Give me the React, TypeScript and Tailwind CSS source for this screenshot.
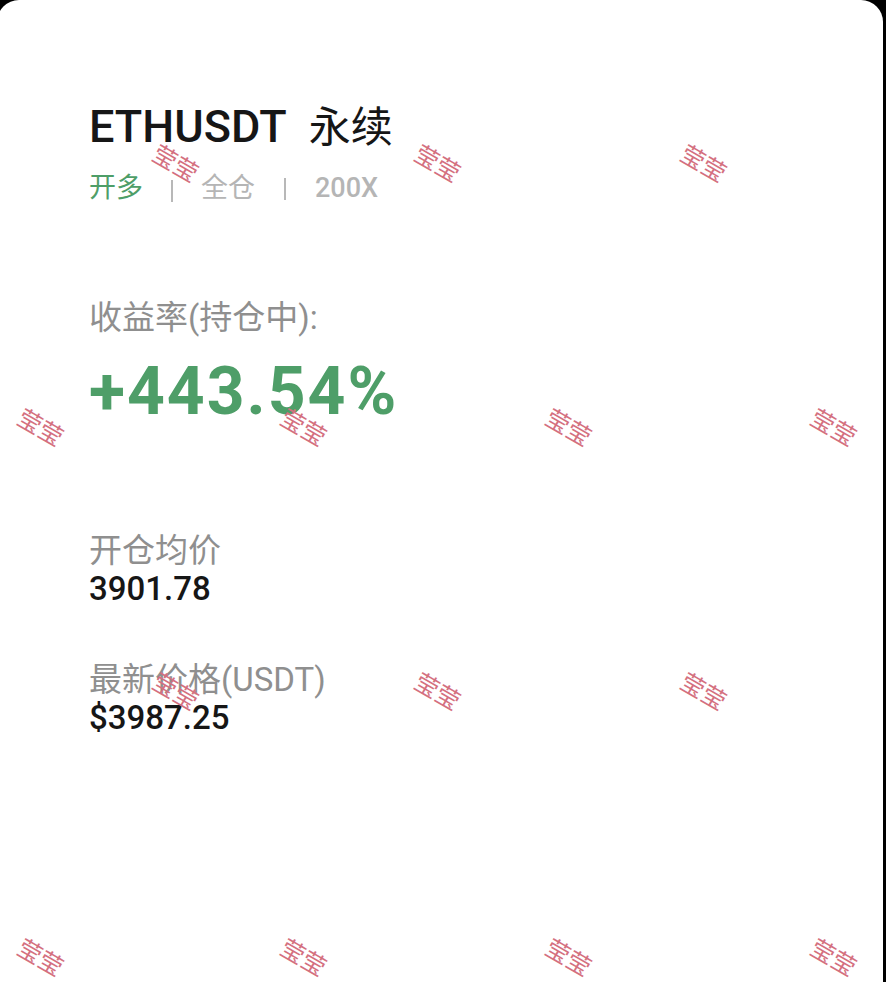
const marks = [
  { x: 175, y: 164 }, { x: 437, y: 164 }, { x: 703, y: 164 },
  { x: 40, y: 428 }, { x: 303, y: 428 }, { x: 568, y: 428 }, { x: 833, y: 428 },
  { x: 175, y: 692 }, { x: 437, y: 692 }, { x: 703, y: 692 },
  { x: 40, y: 958 }, { x: 303, y: 958 }, { x: 568, y: 958 }, { x: 833, y: 958 },
];

export default function App() {
  return (
    <div className="w-[886px] h-[982px] bg-black overflow-hidden" style={{ fontFamily: 'Roboto, "Noto Sans CJK SC", sans-serif' }}>
      <div className="relative ml-[-3px] mr-[3px] h-full bg-white rounded-t-[22px] pl-[92px] pt-[100px]">
        <div className="flex items-baseline gap-[22px] text-[45px] leading-[54px] font-medium text-[#161616]">
          <span>ETHUSDT</span>
          <span className="font-normal text-[42px]">永续</span>
        </div>
        <div className="flex items-center mt-[15px] text-[27px] leading-[36px]">
          <span className="text-[#4e9e68]">开多</span>
          <span className="mx-[28px] mt-[6px] w-[2px] h-[22px] bg-[#b8b8b8]" />
          <span className="text-[#b5b5b5]">全仓</span>
          <span className="mx-[29px] mt-[2px] w-[2px] h-[22px] bg-[#b8b8b8]" />
          <span className="text-[#b5b5b5] font-medium">200X</span>
        </div>

        <div className="mt-[92px] text-[33px] leading-[40px] text-[#8f8f8f]">收益率(持仓中):</div>
        <div className="mt-[14px] text-[66px] leading-[80px] font-bold tracking-[2px] text-[#4e9e68]">+443.54%</div>

        <div className="mt-[99px] text-[33px] leading-[40px] text-[#8f8f8f]">开仓均价</div>
        <div className="text-[33px] leading-[36px] font-medium text-[#161616]">3901.78</div>

        <div className="mt-[53px] text-[33px] leading-[40px] text-[#8f8f8f]">最新价格(USDT)</div>
        <div className="text-[33px] leading-[36px] font-medium text-[#161616]">$3987.25</div>

        {marks.map((m, i) => (
          <span
            key={i}
            className="absolute -translate-x-1/2 -translate-y-1/2 rotate-[30deg] text-[24px] leading-none text-[#d4707f] whitespace-nowrap pointer-events-none"
            style={{ left: m.x + 3, top: m.y }}
          >
            莹莹
          </span>
        ))}
      </div>
    </div>
  );
}
